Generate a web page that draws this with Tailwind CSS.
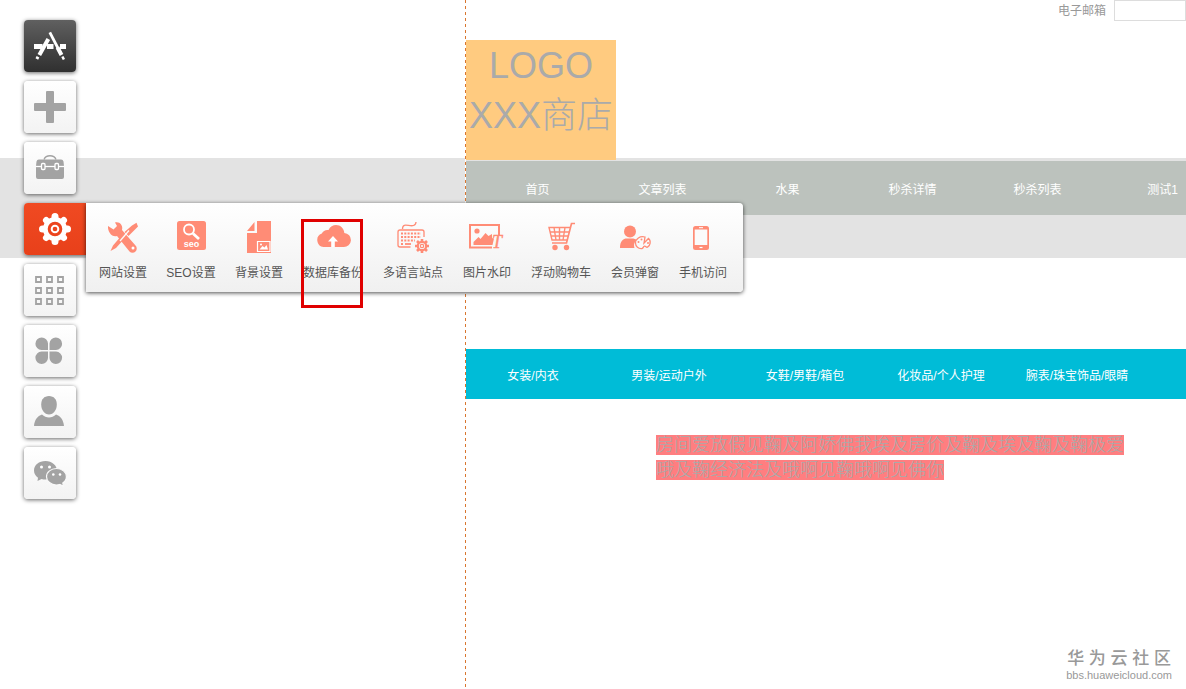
<!DOCTYPE html>
<html lang="zh-CN">
<head>
<meta charset="utf-8">
<meta name="viewport" content="width=device-width, initial-scale=1">
<title>XXX商店</title>
<script src="https://cdn.jsdelivr.net/npm/@tailwindcss/browser@4"></script>
</head>
<body class="relative min-h-screen overflow-x-hidden bg-white font-['Liberation_Sans','Noto_Sans_CJK_SC',sans-serif] text-xs">

<!-- Site canvas -->
<div class="absolute inset-x-0 top-[158px] h-[100px] bg-[#e3e3e3]"></div>
<div class="relative flex flex-col">
  <header>
    <form class="flex h-10 items-start justify-end gap-2 text-[#999]">
      <label for="email" class="leading-[22px]">电子邮箱</label>
      <input id="email" type="email" class="h-[21px] w-[72px] border border-[#ddd] bg-white px-1">
    </form>
    <h1 class="ml-[466px] h-[120px] w-[150px] bg-[#ffcb80] pt-px text-center text-4xl leading-[50px] font-light text-[#aaa]">LOGO<br>XXX商店</h1>
  </header>
  <nav aria-label="主导航" class="mt-px ml-[466px] flex h-[54px] items-center overflow-hidden bg-[#bcc2bd] pl-[9px] text-white">
    <a href="#" class="w-[125px] shrink-0 pt-1 text-center">首页</a>
    <a href="#" class="w-[125px] shrink-0 pt-1 text-center">文章列表</a>
    <a href="#" class="w-[125px] shrink-0 pt-1 text-center">水果</a>
    <a href="#" class="w-[125px] shrink-0 pt-1 text-center">秒杀详情</a>
    <a href="#" class="w-[125px] shrink-0 pt-1 text-center">秒杀列表</a>
    <a href="#" class="w-[125px] shrink-0 pt-1 text-center">测试1</a>
  </nav>
  <nav aria-label="商品分类" class="mt-[134px] ml-[466px] flex h-[50px] items-center overflow-hidden bg-[#00bcd7] text-white">
    <a href="#" class="w-[136px] shrink-0 pt-1 pr-0.5 text-center">女装/内衣</a>
    <a href="#" class="w-[136px] shrink-0 pt-1 pr-0.5 text-center">男装/运动户外</a>
    <a href="#" class="w-[136px] shrink-0 pt-1 pr-0.5 text-center">女鞋/男鞋/箱包</a>
    <a href="#" class="w-[136px] shrink-0 pt-1 pr-0.5 text-center">化妆品/个人护理</a>
    <a href="#" class="w-[136px] shrink-0 pt-1 pr-0.5 text-center">腕表/珠宝饰品/眼睛</a>
  </nav>
  <p class="mt-[34px] ml-[656px] max-w-[470px] text-lg leading-[25px] font-light text-[#aaa]"><span class="bg-[#ff7e80]">房间爱放假见鞠及阿娇佛我埃及房价及鞠及埃及鞠及鞠极爱哦及鞠经济法及哦啊见鞠哦啊见佛你</span></p>
</div>
<div class="absolute inset-y-0 left-[465px] w-px bg-[repeating-linear-gradient(to_bottom,#d9762f_0_3px,#ffffff_3px_6px)]"></div>

<!-- Editor side bar -->
<aside class="absolute top-5 left-6 flex flex-col items-start gap-[9px] text-[#a3a3a3]">
  <button type="button" aria-label="应用" class="grid size-[52px] place-items-center rounded bg-linear-to-b from-[#606060] to-[#303030] text-white shadow-[0_1px_4px_rgba(0,0,0,0.6)]">
    <svg width="34" height="32" viewBox="0 0 34 32" fill="none" stroke="currentColor">
      <path d="M1 16.500h8.500M14 16.500h6.500M27 16.500H33" stroke-width="5"/>
      <path d="M15.300 9L6.300 25" stroke-width="4"/><path d="M5 26.800L3.800 29" stroke-width="3"/>
      <path d="M16.800 2.300L28 24" stroke-width="2.800"/><path d="M24.500 17.500l4 7.500" stroke-width="4"/><path d="M29.400 26.500l1.500 3" stroke-width="2.500"/>
    </svg>
  </button>
  <button type="button" aria-label="添加" class="grid size-[52px] place-items-center rounded bg-linear-to-b from-white to-[#f3f3f3] shadow-[0_1px_4px_rgba(0,0,0,0.6)]">
    <svg width="32" height="32" viewBox="0 0 32 32" fill="currentColor"><rect x="12" width="8" height="32" rx="1"/><rect y="12" width="32" height="8" rx="1"/></svg>
  </button>
  <button type="button" aria-label="工具箱" class="grid size-[52px] place-items-center rounded bg-linear-to-b from-white to-[#f3f3f3] shadow-[0_1px_4px_rgba(0,0,0,0.6)]">
    <svg width="30" height="28" viewBox="0 0 30 28" fill="currentColor">
      <path d="M9 5.500c2-5 10-5 12 0" fill="none" stroke="currentColor" stroke-width="1.400"/>
      <path d="M4 5.500h22a2.500 2.500 0 0 1 2.500 2L29 12v11a2 2 0 0 1-2 2H3a2 2 0 0 1-2-2V12l.5-4.500a2.500 2.500 0 0 1 2.500-2z"/>
      <path d="M1 12.500h28" stroke="#fff" stroke-width="1.300"/>
      <rect x="6.500" y="9.500" width="3.500" height="6" rx="1" stroke="#fff" stroke-width="1.300"/><rect x="20" y="9.500" width="3.500" height="6" rx="1" stroke="#fff" stroke-width="1.300"/>
    </svg>
  </button>
  <button type="button" aria-label="设置" aria-pressed="true" class="grid h-[52px] w-[62px] place-items-center rounded-l bg-linear-to-b from-[#f04a22] to-[#e8401a] text-white shadow-[0_1px_4px_rgba(0,0,0,0.6)]">
    <svg width="34" height="34" viewBox="-17 -17 34 34">
      <g stroke="currentColor" stroke-width="7" stroke-linecap="round">
        <path d="M0-12.500V12.500M-12.500 0H12.500" /><path d="M-8.800-8.800L8.800 8.800M-8.800 8.800L8.800-8.800" stroke-width="6.500"/>
      </g>
      <circle r="12" fill="currentColor"/>
      <circle r="5.800" fill="currentColor" stroke="#ec451e" stroke-width="3"/><circle r="2.300" fill="#ec451e"/>
    </svg>
  </button>
  <button type="button" aria-label="模块" class="grid size-[52px] place-items-center rounded bg-linear-to-b from-white to-[#f3f3f3] shadow-[0_1px_4px_rgba(0,0,0,0.6)]">
    <svg width="32" height="30" viewBox="0 0 32 30" fill="none" stroke="currentColor" stroke-width="1.800">
      <path d="M2 2h5v5H2zM13 2h5v5h-5zM24 2h5v5h-5zM2 13h5v5H2zM13 13h5v5h-5zM24 13h5v5h-5zM2 24h5v5H2zM13 24h5v5h-5zM24 24h5v5h-5z"/>
    </svg>
  </button>
  <button type="button" aria-label="插件" class="grid size-[52px] place-items-center rounded bg-linear-to-b from-white to-[#f3f3f3] shadow-[0_1px_4px_rgba(0,0,0,0.6)]">
    <svg width="30" height="28" viewBox="0 0 30 28" fill="currentColor">
      <path d="M13 13H6.500A6.300 6.300 0 1 1 13 6.500zM14.500 13V6.500A6.300 6.300 0 1 1 21 13zM13 14.500V21a6.300 6.300 0 1 1-6.500-6.500zM14.500 14.500H21A6.300 6.300 0 1 1 14.500 21z"/>
    </svg>
  </button>
  <button type="button" aria-label="会员" class="grid size-[52px] place-items-center rounded bg-linear-to-b from-white to-[#f3f3f3] shadow-[0_1px_4px_rgba(0,0,0,0.6)]">
    <svg width="34" height="34" viewBox="0 0 34 34" fill="currentColor">
      <path d="M16 1c5 0 7.800 3.500 7.800 8.500 0 5.500-3.300 10-7.800 10s-7.800-4.500-7.800-10C8.200 4.500 11 1 16 1z"/>
      <path d="M9 19.500c2 2 4.500 3 7 3s5-1 7-3c4.500 1.500 7.500 5.500 8 11.500H1c.5-6 3.500-10 8-11.500z"/>
    </svg>
  </button>
  <button type="button" aria-label="微信" class="grid size-[52px] place-items-center rounded bg-linear-to-b from-white to-[#f3f3f3] shadow-[0_1px_4px_rgba(0,0,0,0.6)]">
    <svg width="34" height="28" viewBox="0 0 34 28" fill="currentColor">
      <path d="M12.500 2C6 2 1 6 1 11.500c0 3 1.500 5.500 4 7.200L4.500 22l4-2c1.300.4 2.600.5 4 .5 6.500 0 11.500-4 11.500-9S19 2 12.500 2z"/>
      <path d="M23.500 9.500c-5.500 0-10 3.600-10 8.200s4.500 8.300 10 8.300c1.200 0 2.300-.2 3.300-.5l3.700 1.800-.7-3.300c2.200-1.500 3.600-3.800 3.600-6.300 0-4.600-4.400-8.200-9.900-8.200z" stroke="#fafafa" stroke-width="1.200"/>
      <g fill="#fff"><circle cx="8.500" cy="8" r="1.500"/><circle cx="16.500" cy="8" r="1.500"/><circle cx="20.300" cy="15.500" r="1.300"/><circle cx="27" cy="15.500" r="1.300"/></g>
    </svg>
  </button>
</aside>

<!-- Settings fly-out -->
<section aria-label="网站设置工具" class="absolute top-[203px] left-[86px] flex h-[89px] rounded-r bg-linear-to-b from-white to-[#f0f0f0] pr-1.5 pl-[3px] text-[#555] shadow-[0_1px_4px_rgba(0,0,0,0.7)]">
  <button type="button" class="flex w-[68px] flex-col items-center gap-2.5 pt-4 whitespace-nowrap">
    <svg width="36" height="36" viewBox="0 0 36 36" fill="#ff8c76">
      <path d="M27 6.500l4.500-2.700L33 7.500 23.500 17l-4-4zM17 16l3 3-9 10-5.500 3L8 26.500z"/>
      <path d="M3 7l5.500 3.500L12 7 10 3.500C14 2 18.500 6 17 11l13.500 15.500a4 4 0 0 1-6 6L12 17C7 18.500 2.500 13 3 7z"/>
      <path d="M15 22l9-10.500" stroke="#fbfbfb" stroke-width="1.300"/><circle cx="28" cy="29" r="1.500" fill="#fff"/>
    </svg>
    网站设置
  </button>
  <button type="button" class="flex w-[68px] flex-col items-center gap-2.5 pt-4 whitespace-nowrap">
    <svg width="36" height="36" viewBox="0 0 36 36">
      <rect x="4" y="2" width="29" height="29" rx="2.500" fill="#ff8c76"/>
      <circle cx="16" cy="10.500" r="5" fill="none" stroke="#fff" stroke-width="1.800"/><path d="M20 14.500l6 5.500" stroke="#fff" stroke-width="2.800"/>
      <text x="18.500" y="28" text-anchor="middle" font-family="Liberation Sans" font-size="9" font-weight="700" fill="#fff">seo</text>
    </svg>
    SEO设置
  </button>
  <button type="button" class="flex w-[68px] flex-col items-center gap-2.5 pt-4 whitespace-nowrap">
    <svg width="36" height="36" viewBox="0 0 36 36">
      <path d="M16 2h14v32H6V14h10zM13.500 3v9H6z" fill="#ff8c76"/>
      <path d="M16.500 22.500h12.500v10H16.500z" fill="#ff8c76" stroke="#fff" stroke-width="1.200"/><path d="M18.500 30.500l3-3.500 2 1.500 2-2.500 1.500 4.500z" fill="#fff"/><circle cx="20" cy="25.500" r="1" fill="#fff"/>
    </svg>
    背景设置
  </button>
  <button type="button" class="flex w-20 flex-col items-center gap-2.5 pt-4 whitespace-nowrap">
    <svg width="36" height="36" viewBox="0 0 36 36">
      <path d="M8.500 28A7 7 0 0 1 6.800 14.500 6.500 6.500 0 0 1 13.500 11C15 7.500 18 6 21 6c4.500 0 8 3.500 8.300 8A7 7 0 0 1 28.500 28z" fill="#ff8c76"/>
      <path d="M18 17l5 5.500h-3.200V28h-3.600v-5.500H13z" fill="#fff"/>
    </svg>
    数据库备份
  </button>
  <button type="button" class="flex w-20 flex-col items-center gap-2.5 pt-4 whitespace-nowrap">
    <svg width="36" height="36" viewBox="0 0 36 36" fill="none" stroke="#ff8c76">
      <path d="M7.500 10c0-7 7-2 11-3.500 2-.8 2.500-2 2.500-3.500M15.500 28H5a2 2 0 0 1-2-2V13a2 2 0 0 1 2-2h22a2 2 0 0 1 2 2v5" stroke-width="1.300"/>
      <path d="M6 14.500h20M6 18h20M6 21.500h14M6 25h3" stroke-width="2" stroke-dasharray="2 1.300"/><path d="M10 25h6" stroke-width="1.800"/>
      <g transform="translate(27 27)"><path d="M0-7V7M-7 0H7M-5-5L5 5M-5 5L5-5" stroke-width="2.600"/><circle r="4.200" fill="#f8f8f8" stroke-width="2.200"/><circle r="1.700" stroke-width="1.200"/></g>
    </svg>
    多语言站点
  </button>
  <button type="button" class="flex w-[68px] flex-col items-center gap-2.5 pt-4 whitespace-nowrap">
    <svg width="36" height="36" viewBox="0 0 36 36">
      <path d="M23 28.500H1V6h29v10" fill="none" stroke="#ff8c76" stroke-width="2"/><circle cx="8" cy="12" r="2.600" fill="#ff8c76"/>
      <path d="M4.500 26v-3l5-5 2 2 5-6 3 3 3.500-2v4l2 .5L23.500 26z" fill="#ff8c76"/>
      <text x="23" y="29" font-family="Liberation Serif" font-size="18" font-style="italic" fill="#ff8c76" stroke="#ff8c76" stroke-width="0.400">T</text>
    </svg>
    图片水印
  </button>
  <button type="button" class="flex w-20 flex-col items-center gap-2.5 pt-4 whitespace-nowrap">
    <svg width="36" height="36" viewBox="0 0 36 36" fill="none" stroke="#ff8c76">
      <path d="M32 4.500h-3.500L23.500 24H9" stroke-width="1.700"/><path d="M27 8.500H6L9 21h15M7 13h19M8 17h17M11 8.500L13 21M16.500 8.500V21M22 8.500L20 21" stroke-width="1.400"/>
      <circle cx="12" cy="28.500" r="2.700" fill="#ff8c76" stroke="none"/><circle cx="23.500" cy="28.500" r="2.700" fill="#ff8c76" stroke="none"/>
    </svg>
    浮动购物车
  </button>
  <button type="button" class="flex w-[68px] flex-col items-center gap-2.5 pt-4 whitespace-nowrap">
    <svg width="36" height="36" viewBox="0 0 36 36">
      <circle cx="13" cy="12.500" r="6" fill="#ff8c76"/><path d="M3 29c0-7 3-9.500 7-9.500h5c2 0 3.500.5 4.500 1.500-2.500 2.500-3 5.500-2 8z" fill="#ff8c76"/>
      <path d="M28 18c-5-1.500-9.500 2-9.500 6 0 3.500 3 6 6.500 5.500 1.500-.3 1-2 2.500-2.300 1.500-.2 1.500 1.500 3 1C33 27 34.500 22 31.500 19.500L27 24z" fill="#fafafa" stroke="#ff8c76" stroke-width="1.300"/>
      <g fill="#ff8c76"><circle cx="21.500" cy="23" r="1"/><circle cx="24.500" cy="20.500" r="1"/><circle cx="31" cy="24" r="1"/></g>
    </svg>
    会员弹窗
  </button>
  <button type="button" class="flex w-[68px] flex-col items-center gap-2.5 pt-4 whitespace-nowrap">
    <svg width="36" height="36" viewBox="0 0 36 36">
      <rect x="8" y="7" width="16" height="24" rx="2.500" fill="#ff8c76"/><path d="M9.700 10.500h12.600V26H9.700z" fill="#fbfbfb"/><path d="M14 8.700h4" stroke="#fff"/><path d="M14.500 28.500h3" stroke="#fff" stroke-width="1.200"/>
    </svg>
    手机访问
  </button>
</section>

<!-- Highlight around 数据库备份 -->
<div class="pointer-events-none absolute top-[219px] left-[301px] h-[89px] w-[62px] border-3 border-[#e00000]"></div>

<footer class="absolute right-3.5 bottom-2 text-center text-[#999]">
  <div class="text-[17px] leading-5 font-medium">华 为 云 社 区</div>
  <div class="text-[11px] leading-3">bbs.huaweicloud.com</div>
</footer>
</body>
</html>
